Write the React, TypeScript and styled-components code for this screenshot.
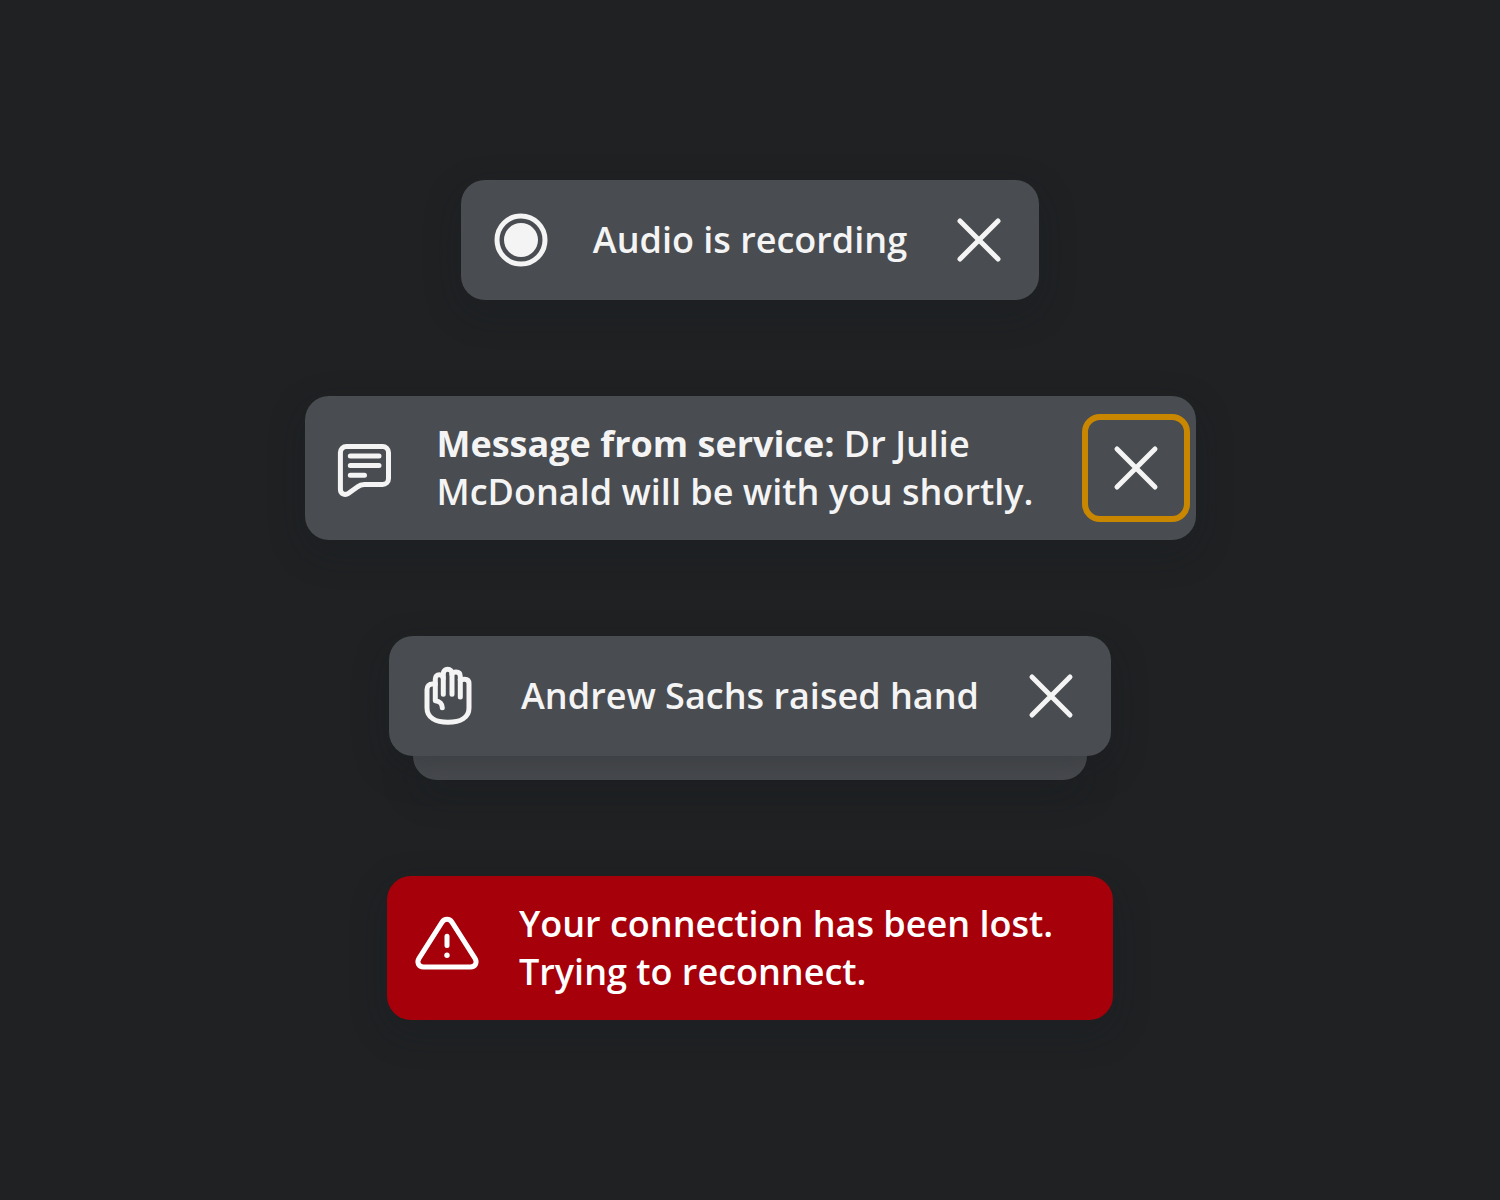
import React from "react";
import styled, { createGlobalStyle } from "styled-components";

const GlobalStyle = createGlobalStyle`
  *, *::before, *::after {
    box-sizing: border-box;
  }
  body {
    margin: 0;
    background: #1f2123;
    font-family: "Open Sans", "Noto Sans", sans-serif;
  }
`;

const Page = styled.main`
  display: flex;
  flex-direction: column;
  align-items: center;
  justify-content: center;
  gap: 96px;
  min-height: 100vh;
  padding: 48px 24px;
`;

const Stack = styled.div`
  display: flex;
  flex-direction: column;
  max-width: 100%;
`;

const StackedEdge = styled.div`
  height: 24px;
  margin: 0 24px;
  border-radius: 0 0 24px 24px;
  background: #494c50;
  box-shadow: 0 12px 36px rgba(26, 28, 33, 0.28);
`;

const Toast = styled.div<{ $tone?: "error" }>`
  position: relative;
  z-index: 1;
  display: flex;
  align-items: center;
  max-width: 100%;
  padding: 12px 12px 12px 24px;
  border-radius: 24px;
  color: ${(p) => (p.$tone === "error" ? "#ffffff" : "#f4f4f4")};
  background: ${(p) => (p.$tone === "error" ? "#a6000a" : "#494c50")};
  box-shadow: 0 12px 36px rgba(26, 28, 33, 0.28);
`;

const Icon = styled.svg`
  flex: none;
  width: 72px;
  height: 72px;
  fill: none;
  stroke: currentColor;
  stroke-width: 5;
  stroke-linecap: round;
  stroke-linejoin: round;
`;

const Message = styled.p<{ $last?: boolean }>`
  max-width: 627px;
  margin: 0;
  padding: 12px ${(p) => (p.$last ? 48 : 24)}px 12px 36px;
  box-sizing: content-box;
  font-size: 36px;
  line-height: 48px;
  font-weight: 600;
`;

const WideMessage = styled(Message)`
  width: 627px;
`;

const Sender = styled.strong`
  font-weight: 700;
`;

const Close = styled.button<{ $focused?: boolean }>`
  display: flex;
  flex: none;
  align-items: center;
  justify-content: center;
  width: 96px;
  height: 96px;
  padding: 0;
  border: 0;
  border-radius: 12px;
  color: inherit;
  background: transparent;
  cursor: pointer;
  outline: ${(p) => (p.$focused ? "6px solid #c98700" : "none")};

  &:focus-visible {
    outline: 6px solid #c98700;
  }
`;

function CloseButton({ focused }: { focused?: boolean }) {
  return (
    <Close type="button" aria-label="Dismiss" $focused={focused}>
      <Icon viewBox="0 0 72 72" aria-hidden="true">
        <path d="M17 17 55 55M55 17 17 55" />
      </Icon>
    </Close>
  );
}

function RecordIcon() {
  return (
    <Icon viewBox="0 0 72 72" aria-hidden="true">
      <circle cx="36" cy="36" r="24" />
      <circle cx="36" cy="36" r="17" fill="currentColor" stroke="none" />
    </Icon>
  );
}

function ChatIcon() {
  return (
    <Icon viewBox="0 0 72 72" aria-hidden="true">
      <path d="M17.4 14.5H53.5a6 6 0 0 1 6 6V46.5a6 6 0 0 1-6 6H35.5c-3 0-5 .7-7.2 2.5L19.6 61.2c-3.4 2.4-8.2.9-8.2-4V20.5a6 6 0 0 1 6-6Z" />
      <path d="M21.3 24H50M21.3 33.6H50M21.3 43.2H35.5" />
    </Icon>
  );
}

function HandIcon() {
  return (
    <Icon viewBox="0 0 72 72" aria-hidden="true">
      <path d="M22.3 24H19.5c-3.4 0-5.5 2.2-5.5 5.5V48c0 9.6 8.6 14.3 21 14.3S56 57.6 56 48V23.7c0-2.9-1.6-4.5-4.3-4.5s-4.4.8-4.4.8" />
      <path d="M29.3 47.7c0-3.7-2.6-6.7-7-7V19c0-2.7 1.5-4.3 4-4.3s4 1.6 4 4.3V34.3" />
      <path d="M30.3 18V13.7c0-2.8 1.7-4.4 4.35-4.4S39 10.9 39 13.7V34.3" />
      <path d="M39 14c.6-1.3 2-2 4-2 2.8 0 4.3 1.6 4.3 4.4V37" />
    </Icon>
  );
}

function WarningIcon() {
  return (
    <Icon viewBox="0 0 72 72" aria-hidden="true">
      <path d="M30.9 10.3c2.5-4 7.7-4 10.2 0L64 46.4c2.6 4.2.3 8.6-4.5 8.6h-47c-4.8 0-7.1-4.4-4.5-8.6Z" />
      <path d="M36 24.2V33.6" />
      <circle cx="36" cy="43.3" r="2.7" fill="currentColor" stroke="none" />
    </Icon>
  );
}

export default function App() {
  return (
    <>
      <GlobalStyle />
      <Page>
        <Toast role="status">
          <RecordIcon />
          <Message>Audio is recording</Message>
          <CloseButton />
        </Toast>

        <Toast role="status">
          <ChatIcon />
          <WideMessage>
            <Sender>Message from service:</Sender> Dr Julie
            <br />
            McDonald will be with you shortly.
          </WideMessage>
          <CloseButton focused />
        </Toast>

        <Stack>
          <Toast role="status">
            <HandIcon />
            <Message>Andrew Sachs raised hand</Message>
            <CloseButton />
          </Toast>
          <StackedEdge />
        </Stack>

        <Toast role="alert" $tone="error">
          <WarningIcon />
          <Message $last>
            Your connection has been lost.
            <br />
            Trying to reconnect.
          </Message>
        </Toast>
      </Page>
    </>
  );
}
